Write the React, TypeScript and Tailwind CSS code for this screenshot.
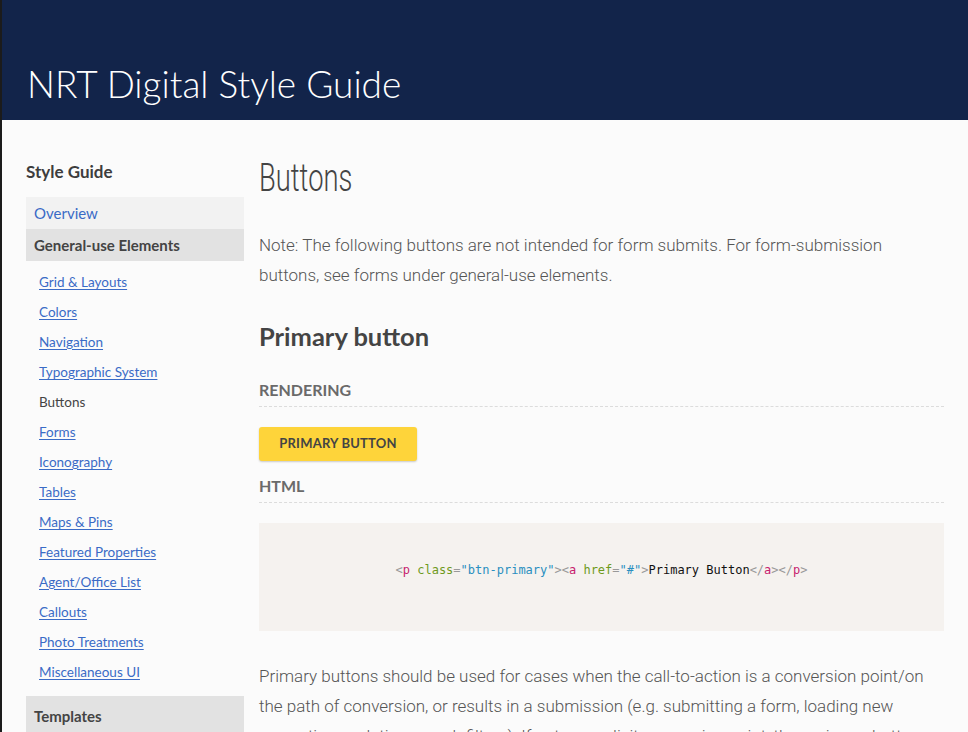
import React from "react";

const links = [
  "Grid & Layouts",
  "Colors",
  "Navigation",
  "Typographic System",
  "Buttons",
  "Forms",
  "Iconography",
  "Tables",
  "Maps & Pins",
  "Featured Properties",
  "Agent/Office List",
  "Callouts",
  "Photo Treatments",
  "Miscellaneous UI",
];

export default function App() {
  return (
    <div className="w-[968px] h-[732px] overflow-hidden bg-[#fbfbfb] border-l-2 border-[#1b1b1b] font-['Lato',sans-serif]">
      <header className="h-[120px] bg-[#12244a] flex items-end pb-[18px] pl-[25px]">
        <h1 className="text-white text-[37px] font-light leading-none">NRT Digital Style Guide</h1>
      </header>
      <div className="flex">
        <aside className="w-[218px] ml-[24px] shrink-0">
          <div className="mt-[43px] text-[17px] font-bold text-[#3d3d3d] leading-none">Style Guide</div>
          <div className="mt-[17px]">
            <div className="h-[32px] bg-[#f2f2f2] flex items-center px-[8px] text-[15px] text-[#3a6bc6]">Overview</div>
            <div className="h-[32px] bg-[#e2e2e2] flex items-center px-[8px] text-[15px] font-bold text-[#444]">General-use Elements</div>
            <ul className="pt-[6px] pb-[9px]">
              {links.map((l) => (
                <li key={l} className="h-[30px] flex items-center pl-[13px] text-[13.5px]">
                  {l === "Buttons" ? (
                    <span className="text-[#444]">{l}</span>
                  ) : (
                    <a href="#" className="text-[#3a6bc6] underline underline-offset-2">{l}</a>
                  )}
                </li>
              ))}
            </ul>
            <div className="h-[40px] bg-[#e2e2e2] flex items-center px-[8px] text-[15px] font-bold text-[#444]">Templates</div>
          </div>
        </aside>
        <main className="ml-[15px] w-[685px] text-[#555] font-['Roboto',sans-serif]">
          <h2 className="mt-[38px] text-[38px] leading-[40px] text-[#444] font-light origin-left scale-x-[0.72] font-['Roboto',sans-serif]">Buttons</h2>
          <p className="mt-[32px] text-[17px] leading-[30px] text-[#555] font-light">
            Note: The following buttons are not intended for form submits. For form-submission buttons, see forms under general-use elements.
          </p>
          <h3 className="mt-[31px] text-[25.5px] font-bold text-[#444] leading-[30px] font-['Lato',sans-serif]">Primary button</h3>
          <div className="mt-[31px] text-[16px] font-bold text-[#6a6a6a] font-['Lato',sans-serif] leading-none pb-[8px] border-b border-dashed border-[#dcdcdc]">RENDERING</div>
          <div className="mt-[20px]">
            <a href="#" className="inline-flex items-center justify-center w-[158px] h-[34px] bg-[#fed43a] rounded-[3px] shadow-[0_1px_2px_rgba(0,0,0,0.2)] text-[13px] font-bold text-[#444] font-['Lato',sans-serif] tracking-[0.2px]">PRIMARY BUTTON</a>
          </div>
          <div className="mt-[17px] text-[16px] font-bold text-[#6a6a6a] font-['Lato',sans-serif] leading-none pb-[8px] border-b border-dashed border-[#dcdcdc]">HTML</div>
          <div className="mt-[20px] h-[108px] bg-[#f5f2ef] flex items-center justify-center pb-[14px]">
            <code className="text-[12px] font-['DejaVu_Sans_Mono',monospace] text-[#111]">
              <span className="text-[#999]">&lt;</span>
              <span className="text-[#c7226e]">p</span>{" "}
              <span className="text-[#6f9a1c]">class</span>
              <span className="text-[#999]">=</span>
              <span className="text-[#2a8fc0]">"btn-primary"</span>
              <span className="text-[#999]">&gt;&lt;</span>
              <span className="text-[#c7226e]">a</span>{" "}
              <span className="text-[#6f9a1c]">href</span>
              <span className="text-[#999]">=</span>
              <span className="text-[#2a8fc0]">"#"</span>
              <span className="text-[#999]">&gt;</span>
              Primary Button
              <span className="text-[#999]">&lt;/</span>
              <span className="text-[#c7226e]">a</span>
              <span className="text-[#999]">&gt;&lt;/</span>
              <span className="text-[#c7226e]">p</span>
              <span className="text-[#999]">&gt;</span>
            </code>
          </div>
          <p className="mt-[30px] text-[17px] leading-[30px] text-[#555] font-light">
            Primary buttons should be used for cases when the call-to-action is a conversion point/on the path of conversion, or results in a submission (e.g. submitting a form, loading new properties, updating search filters). If not an explicit conversion point, then primary buttons should not be used.
          </p>
        </main>
      </div>
    </div>
  );
}
